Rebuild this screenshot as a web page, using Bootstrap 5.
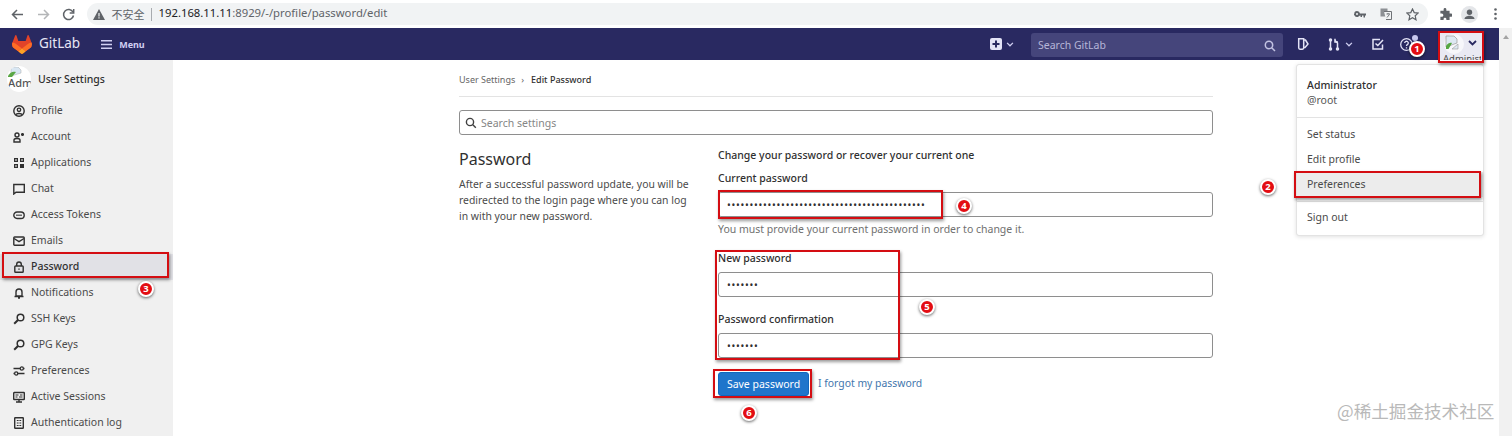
<!DOCTYPE html>
<html lang="en"><head><meta charset="utf-8"><title>Edit Password</title>
<link rel="stylesheet" href="https://cdn.jsdelivr.net/npm/bootstrap@5.3.0/dist/css/bootstrap.min.css">
<style>
html,body{height:436px;overflow:hidden}
body{font-family:"Noto Sans","Open Sans","Noto Sans CJK SC",sans-serif;font-size:10.5px;color:#303030;background:#fff;position:relative}
svg{display:block;flex:none}
.chrome-bar{height:28px;background:#fff;padding:3px 0 3px 11px}
.chrome-btn{width:13px;margin-right:12.5px;color:#5f6368}
.chrome-btn.off{color:#b4b6b8}
.addr-pill{margin-left:-1px;width:1341px;height:22px;background:#f1f3f4;border-radius:11px;padding-left:6px;color:#5f6368;font-size:12px}
.addr-warn{margin-right:7px}
.addr-sep{width:1px;height:13px;background:#a8abaf;margin:0 7px 0 6px}
.addr-host{color:#202124;font-size:11.3px;line-height:20px;padding-bottom:2px}
.addr-path{color:#5f6368}
.addr-icons{gap:0;padding-right:9px}
.ai-tr{margin:0 14px}
.chrome-after{margin-left:11px}
.ca-puzzle{margin-left:0}
.ca-ava{margin:0 16px 0 9px}
.page-wrap{height:408px}
.page-col{width:1499px}
.fake-scroll{width:13px;background:#f1f1f1;padding-top:4px}
.scroll-up{width:0;height:0;border:3px solid transparent;border-bottom:4px solid #a3a3a3;margin:0 auto}
.gl-nav{height:32px;background:#292961;padding:0;color:#d1d0f2;flex-wrap:nowrap;justify-content:flex-start}
.gl-logo{margin-left:12px;margin-right:7px}
.gl-word{color:#e6e6f5;font-size:13.5px;margin-right:21px;line-height:1}
.gl-menu{color:#d1d0f2;font-size:9px;font-weight:700;margin-left:7px;padding-top:1px}
.gl-right{margin-left:auto;margin-right:15px}
.gl-search{width:252px;height:24px;background:#45457b;border-radius:3px;margin:2px 14px 0 17px;padding:1px 7px 0;color:#b6b6d8;font-size:10.5px}
.gl-mr{margin-left:19px}
.gl-todo{margin-left:19px}
.gl-help{margin-left:16px;position:relative}
.gl-dot{position:absolute;width:6px;height:6px;border-radius:50%;background:#c9c9ee;right:-5px;top:-3px}
.gl-user{width:46px;height:29px;margin-left:25px;margin-top:3px;overflow:hidden;position:relative;background:#e9e9f3;border-radius:3px 3px 0 0}
.gl-ava{position:absolute;left:6px;top:3px;width:20px;height:20px;border-radius:50%;background:#f7f7fb}
.gl-ava svg{margin:1px 0 0 1px}
.gl-ava-text{position:absolute;left:5px;top:23px;font-size:9.5px;line-height:10px;color:#4a4a4a;white-space:nowrap;width:38px;overflow:hidden}
.gl-user-chev{position:absolute;left:30px;top:9px}
.app-body{height:376px;overflow:hidden}
.side-panel{width:173px;background:#f0f0f0;flex:none}
.side-head{height:38px;padding:6px 0 0 7px;gap:7px;font-weight:500;font-size:10.5px;color:#303030}
.side-ava{width:24px;height:26px;background:#fff;border-radius:50%;overflow:hidden;position:relative;font-size:11px;color:#555;flex:none}
.side-ava svg{position:absolute;left:1px;top:1px}
.side-ava span{position:absolute;left:1px;top:9px;line-height:16px;white-space:nowrap}
.side-head-text{padding-top:6px}
.side-link{height:26px;padding-left:13px;gap:6px;color:#4a4a4a;font-size:10.5px;text-decoration:none}
.side-link svg{color:#303030}
.side-link.on{background:#e1e1e6;color:#303030;font-weight:500}
.main-pane{width:754px;margin-left:286px;padding-top:0}
.crumb-row{height:37px;margin:0;border-bottom:1px solid #e3e3e3;font-size:9px;color:#666;padding:3px 0 0;flex-wrap:nowrap}
.crumb-row .breadcrumb-item{padding:0}
.crumb-row .breadcrumb-item::before{display:none}
.crumb-cur{color:#303030;font-weight:500}
.crumb-sep{margin:0 7px 0 6px}
.set-search{height:25px;margin-top:13px;border:1px solid #8e8e8e;border-radius:3px;padding:0 0 0 5px;gap:4px;color:#868686;font-size:10.5px}
.set-search span{padding-top:2px}
.pw-row{margin-top:0}
.pw-left{width:259px;flex:none;padding-top:13px}
.pw-title{font-size:16px;font-weight:400;color:#303030;line-height:22px;margin:0 0 6px}
.pw-desc{font-size:10.4px;line-height:16px;color:#4a4a4a;width:235px;margin:0}
.pw-right{flex:1;padding-top:13px}
.pw-lead{font-weight:500;font-size:10.5px;line-height:14px;color:#303030;margin-top:0}
.pw-label{font-weight:500;font-size:10.5px;line-height:14px;color:#303030;margin:0;display:block}
.pw-input{height:25px;border:1px solid #8e8e8e;border-radius:3px;padding:0 8px;font-size:10px;color:#303030;letter-spacing:.75px;box-shadow:none}
.lb-1{margin-top:9px;margin-bottom:7px}
.lb-2{margin-top:15px;margin-bottom:7px}
.lb-3{margin-top:15px;margin-bottom:7px}
.pw-help{font-size:10.5px;line-height:14px;color:#707070;margin-top:5px}
.pw-actions{margin-top:14px;gap:9px}
.pw-save{height:24px;width:91px;padding:0;background:#1f75cb;border-color:#1068bf;font-size:10.5px;border-radius:3px;line-height:1}
.pw-forgot{color:#3f76ad;font-size:10.4px;text-decoration:none}
.user-menu{display:block;position:absolute;left:1296px;top:64px;width:188px;height:172px;border:1px solid #e3e3e3;border-radius:3px;box-shadow:0 1px 4px rgba(0,0,0,.12);padding:0;font-size:10.5px;color:#303030;min-width:0;margin:0}
.um-head{height:52px;padding:13px 10px 0;line-height:15px}
.um-name{font-weight:500}
.um-handle{color:#555}
.user-menu .dropdown-divider{margin:0;border-color:#e3e3e3}
.user-menu .dropdown-item{height:25px;line-height:25px;padding:0 10px;font-size:10.5px;color:#4a4a4a}
.um-item-first{margin-top:4px}
.user-menu .um-item-on{background:#ececec}
.um-div{margin-top:4px!important;margin-bottom:3px!important}
.note-box{position:absolute;z-index:1100;border:2px solid #d40d12;box-shadow:1px 2px 3px rgba(0,0,0,.4);pointer-events:none}
.note-num{position:absolute;z-index:1101;width:16px;height:16px;border-radius:50%;background:#e30d13;border:2px solid #fff;box-shadow:0 1px 3px rgba(0,0,0,.6);color:#fff;font-size:9.5px;font-weight:700;line-height:12px;text-align:center}
.wm-text{position:absolute;left:1337px;top:398px;font-family:"Noto Sans CJK SC","Noto Sans",sans-serif;font-size:17.6px;line-height:26px;color:#b9b9b9;white-space:nowrap}
</style></head>
<body>
<div class="chrome-bar d-flex align-items-center">
  <div class="chrome-btn"><svg width="13" height="13" viewBox="0 0 13 13" fill="none" stroke="currentColor" stroke-width="1.5"><path d="M12 6.500H1.500M6 2 1.500 6.500 6 11"/></svg></div>
  <div class="chrome-btn off"><svg width="13" height="13" viewBox="0 0 13 13" fill="none" stroke="currentColor" stroke-width="1.500"><path d="M1 6.500h10.500M7 2l4.500 4.500L7 11"/></svg></div>
  <div class="chrome-btn"><svg width="13" height="13" viewBox="0 0 13 13" fill="none" stroke="currentColor" stroke-width="1.500"><path d="M11 4.200A5 5 0 1 0 11.500 7.500"/><path d="M11.700 1v4H7.700"/></svg></div>
  <div class="addr-pill d-flex align-items-center">
    <svg class="addr-warn" width="12" height="11" viewBox="0 0 12 11"><path d="M6 0 12 11H0Z" fill="#5f6368"/><path d="M5.400 4h1.200v3.500H5.400zM5.400 8.200h1.200v1.200H5.400z" fill="#f1f3f4"/></svg>
    <span style="font-family:'Noto Sans CJK SC',sans-serif;font-size:11px">不安全</span><span class="addr-sep"></span>
    <span class="addr-host">192.168.11.11<span class="addr-path">:8929/-/profile/password/edit</span></span>
    <div class="addr-icons d-flex align-items-center ms-auto">
      <svg width="12" height="7" viewBox="0 0 12 7" fill="#5f6368"><path d="M3 0a3 3 0 1 1-2.800 4H0V3h.2A3 3 0 0 1 3 0zm0 2a1 1 0 1 0 0 2 1 1 0 0 0 0-2z"/><path d="M5 2.500h7v2h-1v2H9.500v-2H8v1.500H6.500V4.500H5z"/></svg>
      <svg class="ai-tr" width="12" height="12" viewBox="0 0 12 12"><rect x=".5" y=".5" width="7" height="8" fill="#8d9094"/><path d="M4 3.500h7.500v8H6" fill="#f1f3f4" stroke="#6f7276"/><path d="M6.500 6h3.500M8 5v1M7 9.500 9.500 6.500" stroke="#6f7276" fill="none"/></svg>
      <svg width="13" height="13" viewBox="0 0 13 13" fill="none" stroke="#5f6368" stroke-width="1.200"><path d="m6.500 1 1.700 3.600 3.900.5-2.900 2.700.8 3.900-3.500-2-3.500 2 .8-3.900L.9 5.100l3.900-.5z"/></svg>
    </div>
  </div>
  <div class="chrome-after d-flex align-items-center">
    <svg class="ca-puzzle" width="13" height="13" viewBox="0 0 13 13" fill="#5f6368"><path d="M5 1.500a1.500 1.500 0 0 1 3 0V3h3.500v3H13a1.700 1.700 0 0 1 0 3.500h-1.500V13H8v-1a1.500 1.500 0 0 0-3 0v1H1.500V9.500H3A1.700 1.700 0 0 0 3 6H1.500V3H5z" transform="scale(.92)"/></svg>
    <svg class="ca-ava" width="17" height="17" viewBox="0 0 17 17"><circle cx="8.500" cy="8.500" r="8.500" fill="#e4e6e9"/><circle cx="8.500" cy="6.300" r="2.700" fill="#5f6368"/><path d="M3.500 13c0-2.400 3-3.300 5-3.300s5 .9 5 3.300z" fill="#5f6368"/></svg>
    <svg width="3" height="12" viewBox="0 0 3 12" fill="#5f6368"><circle cx="1.500" cy="1.500" r="1.300"/><circle cx="1.500" cy="6" r="1.300"/><circle cx="1.500" cy="10.500" r="1.300"/></svg>
  </div>
</div>

<div class="page-wrap d-flex">
  <div class="page-col">
    <nav class="navbar gl-nav d-flex align-items-center">
      <svg class="gl-logo" width="20" height="19" viewBox="0 0 25 24"><path d="m24.507 9.500-.034-.09L21.082.562a.896.896 0 0 0-1.694.091l-2.290 7.010H7.825L5.535.653a.898.898 0 0 0-1.694-.09L.451 9.411.416 9.500a6.297 6.297 0 0 0 2.090 7.278l.012.01.03.022 5.160 3.867 2.560 1.935 1.554 1.176a1.051 1.051 0 0 0 1.268 0l1.555-1.176 2.560-1.935 5.197-3.890.014-.01A6.297 6.297 0 0 0 24.507 9.500Z" fill="#E24329"/><path d="m24.507 9.500-.034-.09a11.440 11.440 0 0 0-4.560 2.051l-7.447 5.632 4.742 3.584 5.197-3.890.014-.01A6.297 6.297 0 0 0 24.507 9.500Z" fill="#FC6D26"/><path d="m7.707 20.677 2.560 1.935 1.555 1.176a1.051 1.051 0 0 0 1.268 0l1.555-1.176 2.560-1.935-4.743-3.584-4.755 3.584Z" fill="#FCA326"/><path d="M5.010 11.461a11.430 11.430 0 0 0-4.560-2.050L.416 9.500a6.297 6.297 0 0 0 2.090 7.278l.012.01.03.022 5.160 3.867 4.745-3.584-7.444-5.632Z" fill="#FC6D26"/></svg>
      <span class="gl-word">GitLab</span>
      <svg width="11" height="9" viewBox="0 0 11 9" fill="#d1d0f2"><path d="M0 0h11v1.500H0zM0 3.750h11v1.500H0zM0 7.500h11V9H0z"/></svg>
      <span class="gl-menu">Menu</span>
      <div class="gl-right d-flex align-items-center">
        <svg width="12" height="12" viewBox="0 0 12 12"><rect width="12" height="12" rx="2" fill="#e3e3f6"/><path d="M5 2.500h2V5h2.500v2H7v2.500H5V7H2.500V5H5z" fill="#292961"/></svg>
        <svg class="ms-1" width="8" height="5" viewBox="0 0 9 6" fill="none" stroke="#d1d0f2" stroke-width="1.500"><path d="m1 1 3.500 3.500L8 1"/></svg>
        <div class="gl-search d-flex align-items-center justify-content-between"><span>Search GitLab</span>
          <svg width="12" height="12" viewBox="0 0 12 12" fill="none" stroke="#c3c3e2" stroke-width="1.500"><circle cx="5" cy="5" r="3.700"/><path d="m8 8 3 3"/></svg></div>
        <svg width="12" height="12" viewBox="0 0 12 12" fill="none" stroke="#e3e3f6" stroke-width="1.500"><path d="M1.700.8h5v9c0 .8-.5 1.400-1.300 1.400H3c-.8 0-1.300-.6-1.300-1.400z"/><path d="M7 2h1.500L11 6l-3 3.500H7"/></svg>
        <svg class="gl-mr" width="13" height="13" viewBox="0 0 13 13" fill="none" stroke="#e3e3f6" stroke-width="1.500"><path d="M2.500 3v7M9.500 10V5L7 2.500"/><circle cx="2.500" cy="2" r="1" fill="#e3e3f6"/><circle cx="2.500" cy="11" r="1" fill="#e3e3f6"/><circle cx="9.500" cy="11" r="1" fill="#e3e3f6"/><path d="M7 .8v3.200h3"/></svg>
        <svg class="ms-1" width="8" height="5" viewBox="0 0 9 6" fill="none" stroke="#d1d0f2" stroke-width="1.500"><path d="m1 1 3.500 3.500L8 1"/></svg>
        <svg class="gl-todo" width="12" height="12" viewBox="0 0 12 12" fill="none" stroke="#e3e3f6" stroke-width="1.500"><path d="M10.500 6.500V11H1V1.500h7"/><path d="m3.500 5.500 2.300 2L11 2"/></svg>
        <div class="gl-help"><svg width="13" height="13" viewBox="0 0 13 13" fill="none" stroke="#e3e3f6" stroke-width="1.300"><circle cx="6.500" cy="6.500" r="5.800"/><path d="M4.700 5a1.800 1.800 0 1 1 2.700 1.600c-.7.400-.9.800-.9 1.400M6.500 9.300v1.200"/></svg><span class="gl-dot"></span></div>
        <div class="gl-user">
          <div class="gl-ava"><svg width="14" height="16" viewBox="0 0 14 16"><path d="M1 1h8l3 3v4L1 12z" fill="#dde8f2" stroke="#9a9a9a" stroke-width=".7"/><path d="M1 14V11c2-3 4-3.500 6-3L3.500 14z" fill="#55a642"/><path d="M7 14 13 9v5z" fill="#dde8f2" stroke="#9a9a9a" stroke-width=".6"/></svg></div>
          <svg class="gl-user-chev" width="9" height="6" viewBox="0 0 9 6" fill="none" stroke="#292961" stroke-width="1.800"><path d="m1 1 3.500 3.500L8 1"/></svg>
          <div class="gl-ava-text">Administrator</div>
        </div>
      </div>
    </nav>
    <div class="app-body d-flex">
      <aside class="side-panel">
        <div class="side-head d-flex">
          <div class="side-ava"><svg width="14" height="13" viewBox="0 0 14 13"><path d="M3 0h7l3 3v3L3 9z" fill="#d9e7f3" stroke="#aaa" stroke-width=".5"/><path d="M0 9c2-4 5-5 8-4L4 10H0z" fill="#5aa745"/></svg><span>Adm</span></div>
          <div class="side-head-text">User Settings</div>
        </div>
        <nav class="nav flex-column">
          <a class="side-link d-flex align-items-center" href="#"><svg width="12" height="12" viewBox="0 0 12 12" fill="none" stroke="currentColor" stroke-width="1.400"><circle cx="6" cy="6" r="5.200"/><circle cx="6" cy="4.800" r="1.700"/><path d="M2.800 9.800C3.500 8 8.500 8 9.200 9.800"/></svg>Profile</a>
          <a class="side-link d-flex align-items-center" href="#"><svg width="12" height="12" viewBox="0 0 12 12" fill="none" stroke="currentColor" stroke-width="1.400"><circle cx="4" cy="4" r="2"/><path d="M1 11V9c0-2 6-2 6 0v2z"/><path d="M9.500 2v3M8 3.500h3M8.400 2.400l2.200 2.200M10.600 2.400 8.400 4.600" stroke-width="1"/></svg>Account</a>
          <a class="side-link d-flex align-items-center" href="#"><svg width="12" height="12" viewBox="0 0 12 12" fill="currentColor"><path d="M1 1h4v4H1zM7 1h4v4H7zM1 7h4v4H1zM7 7h4v4H7z"/><path d="M2.300 2.300h1.400v1.400H2.300zM8.300 2.300h1.400v1.400H8.300zM2.300 8.300h1.400v1.400H2.300z" fill="#f0f0f0"/></svg>Applications</a>
          <a class="side-link d-flex align-items-center" href="#"><svg width="12" height="12" viewBox="0 0 12 12" fill="none" stroke="currentColor" stroke-width="1.400"><path d="M.8 11V1.500h10.500v7.700H3z"/></svg>Chat</a>
          <a class="side-link d-flex align-items-center" href="#"><svg width="12" height="12" viewBox="0 0 12 12" fill="none" stroke="currentColor" stroke-width="1.400"><rect x=".8" y="3" width="10.400" height="6.500" rx="3.250"/><path d="M3.300 6.200h5.400" stroke-dasharray="1.400 .6"/></svg>Access Tokens</a>
          <a class="side-link d-flex align-items-center" href="#"><svg width="12" height="12" viewBox="0 0 12 12" fill="none" stroke="currentColor" stroke-width="1.400"><rect x=".8" y="2" width="10.400" height="8.200" rx=".8"/><path d="m1 3.500 5 3.200 5-3.200"/></svg>Emails</a>
          <a class="side-link on d-flex align-items-center" href="#"><svg width="12" height="12" viewBox="0 0 12 12" fill="none" stroke="currentColor" stroke-width="1.400"><rect x="1.800" y="5" width="8.400" height="6.200" rx=".8"/><path d="M3.700 5V3.300a2.300 2.300 0 0 1 4.600 0V5"/><path d="M6 7.500v1.200"/></svg>Password</a>
          <a class="side-link d-flex align-items-center" href="#"><svg width="12" height="12" viewBox="0 0 12 12" fill="none" stroke="currentColor" stroke-width="1.400"><path d="M3 9V5a3 3 0 0 1 6 0v4zM1.500 9.500h9M5 11h2"/></svg>Notifications</a>
          <a class="side-link d-flex align-items-center" href="#"><svg width="12" height="12" viewBox="0 0 12 12" fill="none" stroke="currentColor" stroke-width="1.500"><circle cx="7.500" cy="4.500" r="3.300"/><path d="M5 7 1.200 10.800" stroke-width="2"/></svg>SSH Keys</a>
          <a class="side-link d-flex align-items-center" href="#"><svg width="12" height="12" viewBox="0 0 12 12" fill="none" stroke="currentColor" stroke-width="1.500"><circle cx="7.500" cy="4.500" r="3.300"/><path d="M5 7 1.200 10.800" stroke-width="2"/></svg>GPG Keys</a>
          <a class="side-link d-flex align-items-center" href="#"><svg width="12" height="12" viewBox="0 0 12 12" fill="none" stroke="currentColor" stroke-width="1.300"><path d="M.5 3.500h6.500M10.500 3.500h1M.5 8.500h1M5 8.500h6.500"/><circle cx="8.800" cy="3.500" r="1.600"/><circle cx="3.200" cy="8.500" r="1.600"/></svg>Preferences</a>
          <a class="side-link d-flex align-items-center" href="#"><svg width="12" height="12" viewBox="0 0 12 12" fill="none" stroke="currentColor" stroke-width="1.400"><rect x=".7" y="1.500" width="10.600" height="7" rx=".5"/><path d="M3 11h6M6 8.500V11"/><path d="M2.500 4h3M7 4h2.500M2.500 6h2M6 6h3.500" stroke-width="1"/></svg>Active Sessions</a>
          <a class="side-link d-flex align-items-center" href="#"><svg width="12" height="12" viewBox="0 0 12 12" fill="none" stroke="currentColor" stroke-width="1.400"><rect x="1.700" y=".8" width="8.600" height="10.400" rx=".5"/><path d="M3.800 3.500h4.400M3.800 6h4.400M3.800 8.500h4.400" stroke-dasharray="1.200 .4" stroke-width="1.100"/></svg>Authentication log</a>
        </nav>
      </aside>
      <main class="main-pane">
        <ol class="breadcrumb crumb-row align-items-center">
          <li class="breadcrumb-item">User Settings<span class="crumb-sep">›</span></li>
          <li class="breadcrumb-item crumb-cur">Edit Password</li>
        </ol>
        <div class="set-search d-flex align-items-center">
          <svg width="12" height="12" viewBox="0 0 12 12" fill="none" stroke="#404040" stroke-width="1.400"><circle cx="5" cy="5" r="3.600"/><path d="m7.800 7.800 3 3"/></svg>
          <span>Search settings</span>
        </div>
        <div class="row g-0 pw-row flex-nowrap">
          <div class="pw-left">
            <h4 class="pw-title">Password</h4>
            <p class="pw-desc">After a successful password update, you will be redirected to the login page where you can log in with your new password.</p>
          </div>
          <div class="pw-right">
            <div class="pw-lead">Change your password or recover your current one</div>
            <label class="pw-label lb-1" for="pw1">Current password</label>
            <input id="pw1" class="form-control pw-input" type="password" value="11111111111111111111111111111111111111111111">
            <div class="pw-help">You must provide your current password in order to change it.</div>
            <label class="pw-label lb-2" for="pw2">New password</label>
            <input id="pw2" class="form-control pw-input" type="password" value="1111111">
            <label class="pw-label lb-3" for="pw3">Password confirmation</label>
            <input id="pw3" class="form-control pw-input" type="password" value="1111111">
            <div class="d-flex align-items-center pw-actions">
              <button class="btn btn-primary pw-save" type="button">Save password</button>
              <a class="pw-forgot" href="#">I forgot my password</a>
            </div>
          </div>
        </div>
      </main>
    </div>
  </div>
  <div class="fake-scroll"><div class="scroll-up"></div></div>
</div>

<div class="dropdown-menu show user-menu">
  <div class="um-head"><div class="um-name">Administrator</div><div class="um-handle">@root</div></div>
  <div class="dropdown-divider"></div>
  <a class="dropdown-item um-item-first" href="#">Set status</a>
  <a class="dropdown-item" href="#">Edit profile</a>
  <a class="dropdown-item um-item-on" href="#">Preferences</a>
  <div class="dropdown-divider um-div"></div>
  <a class="dropdown-item" href="#">Sign out</a>
</div>

<div class="note-box" style="left:1438px;top:31px;width:46px;height:32px"></div>
<div class="note-box" style="left:1294px;top:171px;width:187px;height:27px"></div>
<div class="note-box" style="left:2px;top:252px;width:167px;height:26px"></div>
<div class="note-box" style="left:718px;top:190px;width:225px;height:29px"></div>
<div class="note-box" style="left:715px;top:250px;width:185px;height:110px"></div>
<div class="note-box" style="left:713px;top:369px;width:99px;height:29px"></div>
<div class="note-num" style="left:1409px;top:41px">1</div>
<div class="note-num" style="left:1260px;top:179px">2</div>
<div class="note-num" style="left:138px;top:281px">3</div>
<div class="note-num" style="left:956px;top:198px">4</div>
<div class="note-num" style="left:919px;top:299px">5</div>
<div class="note-num" style="left:741px;top:405px">6</div>
<div class="wm-text">@稀土掘金技术社区</div>
</body></html>
